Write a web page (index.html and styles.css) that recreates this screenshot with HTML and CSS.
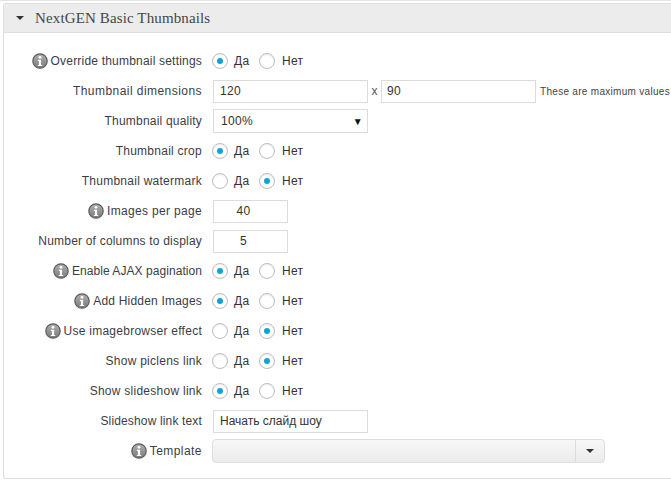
FILE: index.html
```html
<!DOCTYPE html>
<html lang="ru">
<head>
<meta charset="utf-8">
<title>NextGEN Basic Thumbnails</title>
<link rel="stylesheet" href="styles.css">
</head>
<body>
<div class="topline"></div>
<section class="panel">
  <header class="panel-head"><span class="caret"></span><h2 class="panel-title">NextGEN Basic Thumbnails</h2></header>
  <div class="form">
    <div class="row"><div class="label"><svg class="info" viewBox="0 0 16 16"><use href="#i"/></svg>Override thumbnail settings</div><div class="ctl"><span class="radio on"></span><span class="opt">Да</span><span class="radio"></span><span class="opt">Нет</span></div></div>
    <div class="row"><div class="label wide">Thumbnail dimensions</div><div class="ctl"><input class="input w-dim first" value="120"><span class="x">x</span><input class="input w-dim" value="90"><span class="hint">These are maximum values</span></div></div>
    <div class="row"><div class="label">Thumbnail quality</div><div class="ctl"><div class="select first"><span>100%</span><span class="sel-arrow">▼</span></div></div></div>
    <div class="row"><div class="label mid">Thumbnail crop</div><div class="ctl"><span class="radio on"></span><span class="opt">Да</span><span class="radio"></span><span class="opt">Нет</span></div></div>
    <div class="row"><div class="label mid">Thumbnail watermark</div><div class="ctl"><span class="radio"></span><span class="opt">Да</span><span class="radio on"></span><span class="opt">Нет</span></div></div>
    <div class="row"><div class="label semi"><svg class="info" viewBox="0 0 16 16"><use href="#i"/></svg>Images per page</div><div class="ctl"><input class="input w-num first" value="40"></div></div>
    <div class="row"><div class="label">Number of columns to display</div><div class="ctl"><input class="input w-num first" value="5"></div></div>
    <div class="row"><div class="label tight"><svg class="info" viewBox="0 0 16 16"><use href="#i"/></svg>Enable AJAX pagination</div><div class="ctl"><span class="radio on"></span><span class="opt">Да</span><span class="radio"></span><span class="opt">Нет</span></div></div>
    <div class="row"><div class="label"><svg class="info" viewBox="0 0 16 16"><use href="#i"/></svg>Add Hidden Images</div><div class="ctl"><span class="radio on"></span><span class="opt">Да</span><span class="radio"></span><span class="opt">Нет</span></div></div>
    <div class="row"><div class="label mid"><svg class="info" viewBox="0 0 16 16"><use href="#i"/></svg>Use imagebrowser effect</div><div class="ctl"><span class="radio"></span><span class="opt">Да</span><span class="radio on"></span><span class="opt">Нет</span></div></div>
    <div class="row"><div class="label mid">Show piclens link</div><div class="ctl"><span class="radio"></span><span class="opt">Да</span><span class="radio on"></span><span class="opt">Нет</span></div></div>
    <div class="row"><div class="label mid">Show slideshow link</div><div class="ctl"><span class="radio on"></span><span class="opt">Да</span><span class="radio"></span><span class="opt">Нет</span></div></div>
    <div class="row"><div class="label slim">Slideshow link text</div><div class="ctl"><input class="input w-text first" value="Начать слайд шоу"></div></div>
    <div class="row"><div class="label wide"><svg class="info" viewBox="0 0 16 16"><use href="#i"/></svg>Template</div><div class="ctl"><div class="combo"><span class="combo-main"></span><span class="combo-btn"><span class="caret"></span></span></div></div></div>
  </div>
</section>
<svg class="defs" width="0" height="0" aria-hidden="true"><defs>
  <linearGradient id="g" x1="0" y1="0" x2="0" y2="1"><stop offset="0" stop-color="#b0b0b0"/><stop offset="1" stop-color="#7a7a7a"/></linearGradient>
  <g id="i"><circle cx="8" cy="8" r="7.2" fill="url(#g)" stroke="#5c5c5c" stroke-width="1.2"/><circle cx="8" cy="4.3" r="1.4" fill="#fff"/><path d="M5.9 6.7h3.2v5.2h1.1v1.2H5.8v-1.2h1.1V7.9h-1z" fill="#fff"/></g>
</defs></svg>
</body>
</html>
```
FILE: styles.css
```css
html, body { margin: 0; padding: 0; height: 481px; overflow: hidden; background: #fff; }
body { position: relative; font-family: "Liberation Sans", Arial, sans-serif; font-size: 12px; color: #333; }
.topline { height: 1px; background: #e4e4e4; margin-bottom: 2px; }
.panel { margin-left: 3px; width: 700px; height: 476px; box-sizing: border-box; border: 1px solid #dfdfdf; border-right: 0; border-radius: 3px 0 0 3px; background: #fff; }
.panel-head { height: 28px; display: flex; align-items: center; background: #ececec; border-bottom: 1px solid #dfdfdf; }
.panel-head .caret { margin-left: 12px; }
.caret { display: inline-block; width: 0; height: 0; border-left: 4px solid transparent; border-right: 4px solid transparent; border-top: 4px solid #333; }
.panel-title { margin: 0 0 0 11px; font-family: "Liberation Serif", Georgia, serif; font-size: 15px; letter-spacing: 0.13px; font-weight: normal; color: #464646; }
.form { padding-top: 13px; }
.row { height: 30px; display: flex; align-items: center; }
.label { width: 198px; display: flex; justify-content: flex-end; align-items: center; gap: 3px; letter-spacing: 0.2px; color: #3c3c46; white-space: nowrap; }
.label.wide { letter-spacing: 0.45px; }
.label.semi { letter-spacing: 0.33px; }
.label.mid { letter-spacing: 0.26px; }
.label.slim { letter-spacing: 0.15px; }
.label.tight { letter-spacing: 0.06px; }
.info { width: 16px; height: 16px; flex: none; }
.defs { position: absolute; }
.ctl { margin-left: 10px; display: flex; align-items: center; }
.first { margin-left: 1px; }
.radio { width: 16px; height: 16px; box-sizing: border-box; border: 1px solid #bdbdbd; border-radius: 50%; background: #fff; display: flex; align-items: center; justify-content: center; box-shadow: inset 0 1px 2px rgba(0,0,0,.08); }
.radio.on::after { content: ""; width: 6px; height: 6px; border-radius: 50%; background: #0aa5d2; }
.opt { margin-left: 6px; width: 25px; color: #333; letter-spacing: 0.3px; }
.opt ~ .opt { margin-left: 7px; }
.input { box-sizing: border-box; height: 23px; padding: 0 6px; border: 1px solid #dcdcdc; font: 12px "Liberation Sans", Arial, sans-serif; letter-spacing: 0.3px; color: #333; background: #fff; outline: 0; }
.w-dim { width: 155px; }
.x + .w-dim { padding-left: 5px; }
.w-num { width: 75px; padding: 0 14px 0 0; text-align: center; }
.w-text { width: 155px; letter-spacing: 0; }
.x { width: 13px; text-align: center; color: #555; }
.hint { margin-left: 4px; font-size: 10px; letter-spacing: 0.3px; color: #444; white-space: nowrap; }
.select { box-sizing: border-box; width: 155px; height: 24px; padding: 0 4px 0 7px; border: 1px solid #dcdcdc; display: flex; align-items: center; justify-content: space-between; letter-spacing: 0.3px; }
.sel-arrow { font-size: 10px; color: #111; }
.combo { box-sizing: border-box; width: 393px; height: 24px; border: 1px solid #dedede; border-radius: 4px; background: linear-gradient(#f7f7f7, #ececec); display: flex; }
.combo-main { flex: 1; }
.combo-btn { width: 28px; border-left: 1px solid #dcdcdc; display: flex; align-items: center; justify-content: center; }
```
